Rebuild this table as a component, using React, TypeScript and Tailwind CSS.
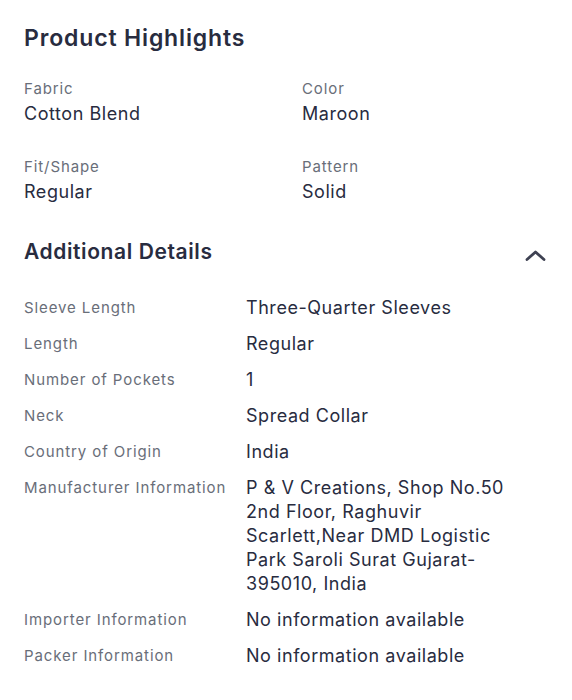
import React from 'react';

const highlights = [
  { label: 'Fabric', value: 'Cotton Blend' },
  { label: 'Color', value: 'Maroon' },
  { label: 'Fit/Shape', value: 'Regular' },
  { label: 'Pattern', value: 'Solid' },
];

const details = [
  { label: 'Sleeve Length', value: 'Three-Quarter Sleeves' },
  { label: 'Length', value: 'Regular' },
  { label: 'Number of Pockets', value: '1' },
  { label: 'Neck', value: 'Spread Collar' },
  { label: 'Country of Origin', value: 'India' },
  {
    label: 'Manufacturer Information',
    value: 'P & V Creations, Shop No.50 2nd Floor, Raghuvir Scarlett,Near DMD Logistic Park Saroli Surat Gujarat-395010, India',
  },
  { label: 'Importer Information', value: 'No information available' },
  { label: 'Packer Information', value: 'No information available' },
];

const App: React.FC = () => {
  return (
    <div className="min-h-screen bg-white text-[#282c3f] font-['Inter',sans-serif]">
      <div className="px-6 pt-[22px]">
        {/* Product Highlights */}
        <h2 className="text-[23px] font-semibold leading-8 tracking-[0.85px]">Product Highlights</h2>
        <div className="grid grid-cols-[278px_1fr] gap-y-[30px] mt-[25px]">
          {highlights.map((h) => (
            <div key={h.label}>
              <div className="text-[15px] leading-5 text-[#696e79] tracking-[0.9px]">{h.label}</div>
              <div className="text-[18px] leading-[26px] mt-[2px] tracking-[0.55px]">{h.value}</div>
            </div>
          ))}
        </div>

        {/* Additional Details */}
        <div className="flex items-center justify-between mt-[31px]">
          <h2 className="text-[21px] font-semibold leading-8 tracking-[0.6px]">Additional Details</h2>
          <svg width="21" height="14" viewBox="0 0 21 14" className="mr-[2px] mt-[6px]">
            <path d="M2 11.5 L10.5 4 L19 11.5" fill="none" stroke="#3e4152" strokeWidth="2.8" strokeLinecap="round" strokeLinejoin="round" />
          </svg>
        </div>

        <div className="mt-[28px] flex flex-col gap-3">
          {details.map((d) => (
            <div key={d.label} className="grid grid-cols-[222px_1fr]">
              <div className="text-[15px] leading-6 text-[#696e79] tracking-[0.9px]">{d.label}</div>
              <div className="text-[18px] leading-6 pr-[40px] tracking-[0.55px]">{d.value}</div>
            </div>
          ))}
        </div>
      </div>
    </div>
  );
};

export default App;
